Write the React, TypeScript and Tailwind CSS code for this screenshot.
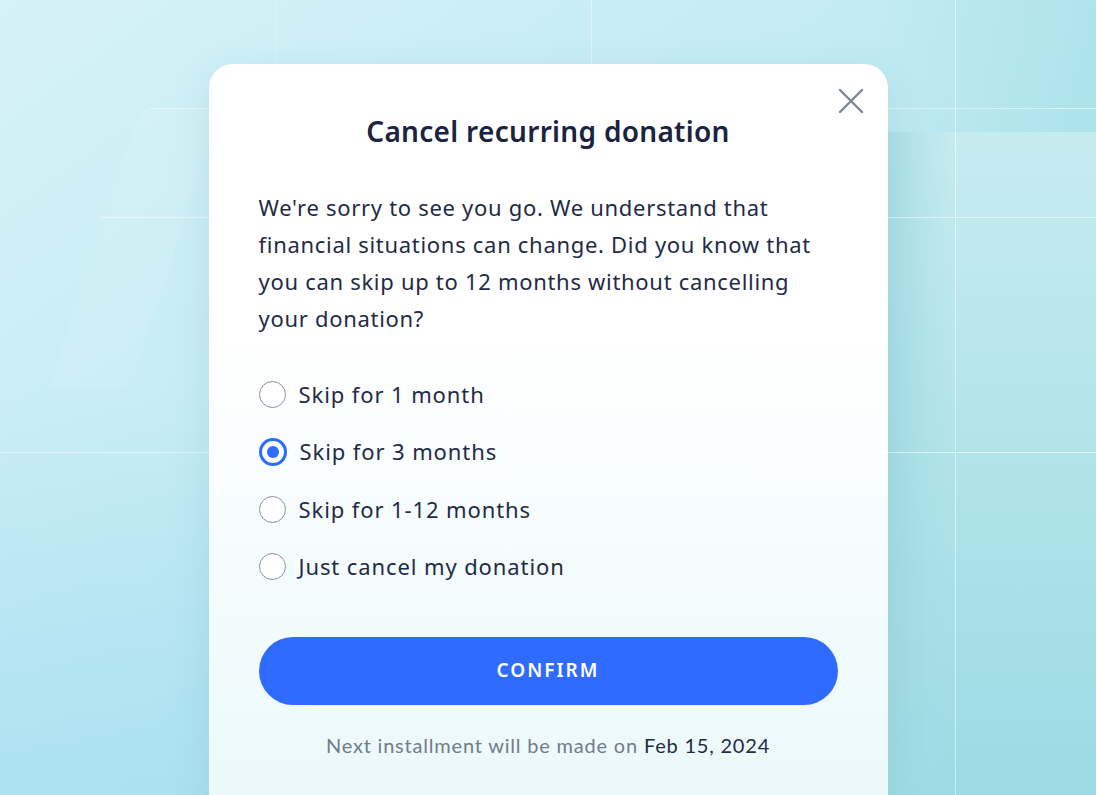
import React from "react";

const options = [
  "Skip for 1 month",
  "Skip for 3 months",
  "Skip for 1-12 months",
  "Just cancel my donation",
];

function Radio({ checked }: { checked: boolean }) {
  if (checked) {
    return (
      <span className="flex h-[28px] w-[28px] shrink-0 items-center justify-center rounded-full border-[3px] border-[#2f6bff]">
        <span className="h-[12px] w-[12px] rounded-full bg-[#2f6bff]" />
      </span>
    );
  }
  return (
    <span className="h-[27px] w-[27px] shrink-0 rounded-full border-[1.5px] border-[#8a909c] bg-white" />
  );
}

export default function App() {
  return (
    <div
      className="relative h-[795px] w-full overflow-hidden bg-gradient-to-br from-[#d6f2f8] via-[#bfeaf2] to-[#94d9e3]"
      style={{ fontFamily: '"Noto Sans", "Open Sans", sans-serif' }}
    >
      {/* decorative background */}
      <div className="pointer-events-none absolute inset-0">
        <div className="absolute left-0 top-[400px] h-[395px] w-[260px] bg-gradient-to-b from-transparent to-[#a6def0] opacity-70" />
        <div className="absolute right-0 top-0 h-[132px] w-[230px] bg-gradient-to-r from-transparent to-[#a9e1e8] opacity-70" />
        <div className="absolute right-0 top-[132px] h-[663px] w-[208px] bg-gradient-to-b from-[#c6ecf0] to-[#9bdbe3]" />
        <div className="absolute left-[888px] top-[132px] h-[663px] w-[67px] bg-gradient-to-r from-[#a3dbe3] to-transparent opacity-70" />
        <div className="absolute left-[95px] top-[108px] h-[280px] w-[80px] -skew-x-[18deg] bg-white opacity-[0.07]" />
        {/* grid lines */}
        <div className="absolute left-[150px] right-0 top-[108px] h-px bg-white opacity-50" />
        <div className="absolute left-[100px] right-0 top-[217px] h-px bg-white opacity-50" />
        <div className="absolute left-0 right-0 top-[452px] h-px bg-white opacity-60" />
        <div className="absolute bottom-0 left-[955px] top-0 w-px bg-white opacity-50" />
        <div className="absolute left-[591px] top-0 h-[64px] w-px bg-white opacity-50" />
        <div className="absolute left-[275px] top-0 h-[64px] w-px bg-white opacity-30" />
      </div>

      <div className="relative flex justify-center pt-[64px]">
        <div className="relative h-[760px] w-[679px] rounded-t-[24px] bg-gradient-to-b from-white from-[35%] to-[#eaf9fb] px-[50px] pt-[48px] shadow-[0_10px_40px_rgba(40,120,140,0.12)]">
          <button className="absolute right-[24px] top-[24px] flex h-[26px] w-[26px] items-center justify-center text-[#7c8597]">
            <svg width="26" height="26" viewBox="0 0 26 26" fill="none" stroke="currentColor" strokeWidth="2.4" strokeLinecap="round">
              <path d="M2 2L24 24M24 2L2 24" />
            </svg>
          </button>

          <h1 className="text-center text-[28px] font-semibold leading-[38px] tracking-[0.3px] text-[#1a2340]">
            Cancel recurring donation
          </h1>

          <p className="mt-[39px] text-[22px] leading-[37px] tracking-[0.7px] text-[#1f2b46]">
            We're sorry to see you go. We understand that financial situations can change. Did you know that you can skip up to 12 months without cancelling your donation?
          </p>

          <div className="mt-[37px] flex flex-col gap-[17.5px]">
            {options.map((o, i) => (
              <label key={o} className="flex h-[40px] items-center gap-[13px] text-[22px] tracking-[0.9px] text-[#1f2b46]">
                <Radio checked={i === 1} />
                <span>{o}</span>
              </label>
            ))}
          </div>

          <button className="mt-[50px] flex h-[68px] w-full items-center justify-center rounded-full bg-[#2f6bff] text-[19px] font-semibold tracking-[2px] text-white">
            CONFIRM
          </button>

          <p
            className="mt-[26px] text-center text-[20px] leading-[28px] tracking-[0.8px] text-[#737b8b]"
            style={{ fontFamily: 'Lato, "Noto Sans", sans-serif' }}
          >
            Next installment will be made on <span className="text-[#1f2b46]">Feb 15, 2024</span>
          </p>
        </div>
      </div>
    </div>
  );
}
